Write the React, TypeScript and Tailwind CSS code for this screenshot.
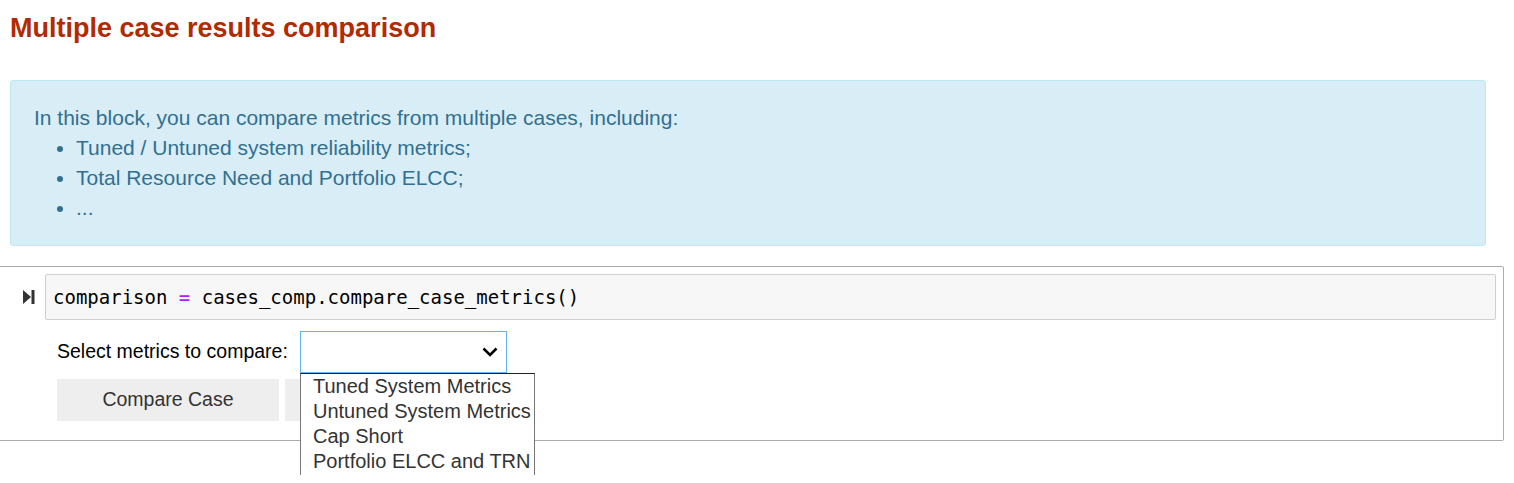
import { useState } from 'react'

const OPTIONS = [
  'Tuned System Metrics',
  'Untuned System Metrics',
  'Cap Short',
  'Portfolio ELCC and TRN',
]

function RunIcon() {
  return (
    <svg width="12" height="14" viewBox="0 0 12 14" className="shrink-0">
      <path d="M0 0 L8 7 L0 14 Z" fill="#333" />
      <rect x="8.5" y="0" width="3" height="14" fill="#333" />
    </svg>
  )
}

function Chevron() {
  return (
    <svg width="16" height="10" viewBox="0 0 16 10">
      <polyline points="1.5,1.5 8,8 14.5,1.5" fill="none" stroke="#000" strokeWidth="2.6" />
    </svg>
  )
}

export default function App() {
  const [open] = useState(true)

  return (
    <div className="min-h-screen bg-white font-['Liberation_Sans',Arial,sans-serif]">
      {/* Heading */}
      <h2 className="px-[10px] pt-[13px] text-[27px] leading-[30px] font-bold text-[#b22a00]">
        Multiple case results comparison
      </h2>

      {/* Info alert */}
      <div className="mx-[10px] mt-[37px] w-[1476px] rounded-[3px] border border-[#bce8f1] bg-[#d9edf7] px-[23px] py-[22px] text-[21px] leading-[30px] text-[#31708f]">
        <p>In this block, you can compare metrics from multiple cases, including:</p>
        <ul className="list-disc pl-[42px]">
          <li>Tuned / Untuned system reliability metrics;</li>
          <li>Total Resource Need and Portfolio ELCC;</li>
          <li>...</li>
        </ul>
      </div>

      {/* Code cell */}
      <div className="mt-[20px] w-[1504px] rounded-r-[2px] border-y border-r border-[#ababab] pt-[7px] pb-[19px]">
        <div className="flex items-center">
          <div className="flex w-[45px] justify-end pr-[10px]">
            <RunIcon />
          </div>
          <div className="mr-[7px] flex h-[46px] flex-1 items-center rounded-[2px] border border-[#cfcfcf] bg-[#f7f7f7] px-[7px] font-['DejaVu_Sans_Mono',monospace] text-[19px] text-black">
            <span className="whitespace-pre">
              comparison <span className="text-[#aa22ff]">=</span> cases_comp.compare_case_metrics()
            </span>
          </div>
        </div>

        <div className="pl-[57px] pt-[11px]">
          <div className="flex items-center gap-[13px]">
            <span className="w-[230px] whitespace-nowrap text-[19.5px] text-black">Select metrics to compare:</span>
            <div className="relative">
              <div className="flex h-[42px] w-[207px] items-center justify-end border border-[#64b5f6] bg-white pr-[8px]">
                <Chevron />
              </div>
              {open && (
                <div className="absolute left-0 top-full z-10 h-[102px] w-[235px] overflow-hidden border-x border-t border-x-[#767676] border-t-[#222] bg-white pl-[12px] text-[20px] leading-[25px] text-[#333]">
                  {OPTIONS.map(o => (
                    <div key={o} className="whitespace-nowrap">{o}</div>
                  ))}
                </div>
              )}
            </div>
          </div>

          <div className="mt-[6px] flex gap-[6px]">
            <button className="h-[42px] w-[222px] bg-[#eeeeee] text-[19.5px] text-[#333]">Compare Case</button>
            <button className="h-[42px] w-[222px] bg-[#eeeeee] text-[19.5px] text-[#333]">Clear Output</button>
          </div>
        </div>
      </div>
    </div>
  )
}
